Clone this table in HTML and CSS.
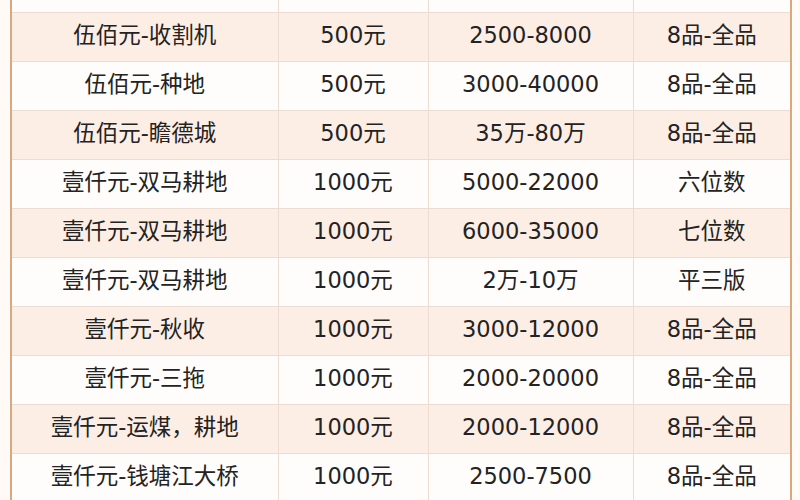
FILE: index.html
```html
<!DOCTYPE html>
<html lang="zh-CN">
<head>
<meta charset="utf-8">
<title>第三套人民币价格表</title>
<link rel="stylesheet" href="styles.css">
</head>
<body>
<div class="sheet">
<table class="prices">
<colgroup>
<col class="c1"><col class="c2"><col class="c3"><col class="c4">
</colgroup>
<tbody>
<tr class="even"><td>伍佰元-炼钢工人</td><td>500元</td><td>2000-6000</td><td>8品-全品</td></tr>
<tr class="odd"><td>伍佰元-收割机</td><td>500元</td><td>2500-8000</td><td>8品-全品</td></tr>
<tr class="even"><td>伍佰元-种地</td><td>500元</td><td>3000-40000</td><td>8品-全品</td></tr>
<tr class="odd"><td>伍佰元-瞻德城</td><td>500元</td><td>35万-80万</td><td>8品-全品</td></tr>
<tr class="even"><td>壹仟元-双马耕地</td><td>1000元</td><td>5000-22000</td><td>六位数</td></tr>
<tr class="odd"><td>壹仟元-双马耕地</td><td>1000元</td><td>6000-35000</td><td>七位数</td></tr>
<tr class="even"><td>壹仟元-双马耕地</td><td>1000元</td><td>2万-10万</td><td>平三版</td></tr>
<tr class="odd"><td>壹仟元-秋收</td><td>1000元</td><td>3000-12000</td><td>8品-全品</td></tr>
<tr class="even"><td>壹仟元-三拖</td><td>1000元</td><td>2000-20000</td><td>8品-全品</td></tr>
<tr class="odd"><td>壹仟元-运煤，耕地</td><td>1000元</td><td>2000-12000</td><td>8品-全品</td></tr>
<tr class="even"><td>壹仟元-钱塘江大桥</td><td>1000元</td><td>2500-7500</td><td>8品-全品</td></tr>
</tbody>
</table>
</div>
</body>
</html>
```
FILE: styles.css
```css
html, body {
  margin: 0;
  padding: 0;
  background: #fffaf6;
  overflow: hidden;
  height: 500px;
}
.sheet {
  padding-left: 10px;
  width: 780px;
  margin-top: -37px;
}
.prices {
  border-collapse: collapse;
  table-layout: fixed;
  width: 780px;
  font-family: "DejaVu Sans", "Noto Sans CJK SC", sans-serif;
  font-size: 22.5px;
  color: #232323;
}
.c1 { width: 267px; }
.c2 { width: 150px; }
.c3 { width: 205px; }
.c4 { width: 158px; }
.prices td {
  height: 49px;
  padding: 0 0 3px 0;
  box-sizing: border-box;
  text-align: center;
  vertical-align: middle;
  border: 1px solid #ecdcd2;
  line-height: 1;
  white-space: nowrap;
}
.prices tr.odd td { background: #fdeee5; }
.prices tr.even td { background: #fffdfb; }
.prices td:first-child { border-left: 2px solid #d8a880; }
.prices td:last-child { border-right: 2px solid #d8a880; }
```
